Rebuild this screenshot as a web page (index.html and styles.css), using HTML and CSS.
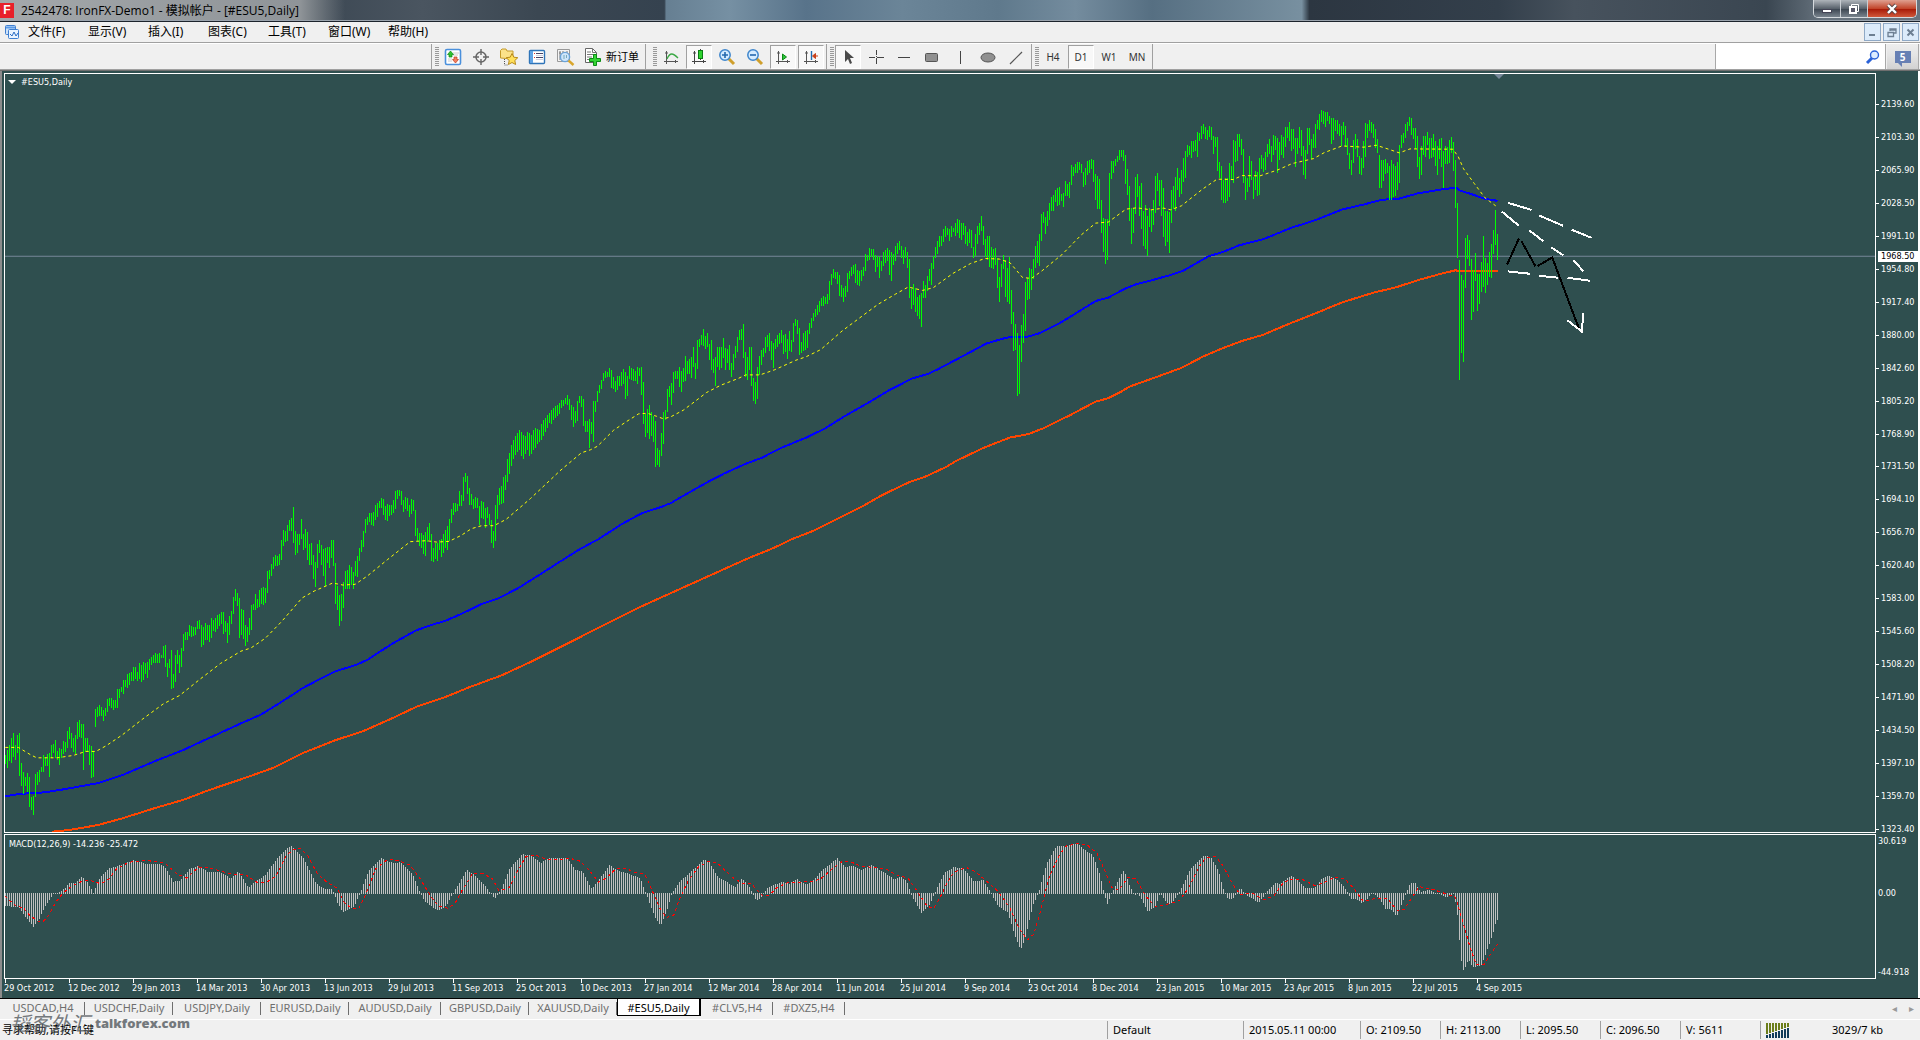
FILE: index.html
```html
<!DOCTYPE html>
<html lang="zh-CN">
<head>
<meta charset="utf-8">
<title>2542478: IronFX-Demo1 - 模拟帐户 - [#ESU5,Daily]</title>
<link rel="stylesheet" href="styles.css">
</head>
<body>
<header class="titlebar">
  <span class="logo">F</span>
  <h1 class="title">2542478: IronFX-Demo1 - 模拟帐户 - [#ESU5,Daily]</h1>
  <div class="winbuttons">
    <button class="win" aria-label="最小化"><svg width="12" height="10"><rect x="1.500" y="5.500" width="9" height="3" fill="#fff" stroke="#445"/></svg></button>
    <button class="win" aria-label="还原"><svg width="12" height="12"><path d="M3.500 1.500h7v7h-7z" fill="none" stroke="#fff" stroke-width="1"/><path d="M2 4h6v6h-6z" fill="#556" stroke="#fff" stroke-width="2"/></svg></button>
    <button class="win close" aria-label="关闭"><svg width="12" height="12"><path d="M2 2l8 8M10 2l-8 8" stroke="#544" stroke-width="4"/><path d="M2 2l8 8M10 2l-8 8" stroke="#fff" stroke-width="2.400"/></svg></button>
  </div>
</header>

<nav class="menubar">
  <svg class="docicon" width="16" height="16"><rect x="1.500" y="1.500" width="10" height="9" rx="1" fill="#cfe3fa" stroke="#3f7fd0"/><path d="M2 3.500h9" stroke="#5b9be8" stroke-width="2"/><rect x="4.500" y="5.500" width="10" height="9" rx="1" fill="#eaf4ff" stroke="#3f7fd0"/><path d="M6 10l2 2 2-4 2 4 2-3" fill="none" stroke="#2a6cc4"/></svg>
  <button>文件(F)</button><button>显示(V)</button><button>插入(I)</button><button>图表(C)</button><button>工具(T)</button><button>窗口(W)</button><button>帮助(H)</button>
  <div class="mdi">
    <button aria-label="最小化子窗口"><svg width="11" height="11"><path d="M2 8h6" stroke="#6d7f92" stroke-width="2"/></svg></button>
    <button aria-label="还原子窗口"><svg width="11" height="11"><path d="M4 4V2h6v4H8M3.500 3h6M2 5.500h5.500v4h-5.500zM2 5.500h5.500" fill="none" stroke="#6d7f92" stroke-width="1.300"/></svg></button>
    <button aria-label="关闭子窗口"><svg width="11" height="11"><path d="M2.500 2.500l6 6M8.500 2.500l-6 6" stroke="#6d7f92" stroke-width="2"/></svg></button>
  </div>
</nav>

<div class="toolbar">
  <div class="group first">
    <button aria-label="市场报价"><svg width="18" height="18"><rect x="1.500" y="1.500" width="15" height="15" rx="1.500" fill="#fff" stroke="#4a90dc" stroke-width="1.600"/><path d="M9 5h6M9 7h5M4 11h4M4 13h4" stroke="#ccc"/><path d="M6.500 3l3 3.500h-1.500v2.500h-3v-2.500h-1.500z" fill="#2fc12f" stroke="#0a8a12" stroke-width=".7"/><path d="M11.500 15l-3-3.500h1.500v-2.500h3v2.500h1.500z" fill="#f08060" stroke="#c03a1c" stroke-width=".7"/></svg></button>
    <button aria-label="数据窗口"><svg width="18" height="18"><circle cx="9" cy="9" r="5" fill="none" stroke="#666" stroke-width="1.500"/><path d="M9 1v6M9 11v6M1 9h6M11 9h6" stroke="#666" stroke-width="1.400"/></svg></button>
    <button aria-label="导航"><svg width="20" height="18"><path d="M1.500 10V2.500l1.500-1.500h4l1 2h6v8z" fill="#fbe28a" stroke="#c49a2a"/><path d="M5.500 11v6h4" fill="none" stroke="#555" stroke-dasharray="1 1"/><path d="M13 5.500l1.800 3.700 4 .5-3 2.800.8 4-3.600-2-3.600 2 .8-4-3-2.800 4-.5z" fill="#ffe05a" stroke="#b88a1a"/></svg></button>
    <button aria-label="终端"><svg width="18" height="16"><rect x="1.500" y="1.500" width="15" height="13" rx="1" fill="#fff" stroke="#2f74b8" stroke-width="1.400"/><path d="M3.500 2v12" stroke="#5ea2e4" stroke-width="3"/><path d="M6 4.500h1M6 8.500h1" stroke="#d33"/><path d="M8 4.500h7M8 8.500h7" stroke="#446"/><path d="M8 6.500h7M8 10.500h7" stroke="#ccd"/></svg></button>
    <button aria-label="策略测试"><svg width="19" height="18"><path d="M1.500 1.500h12v12h-12z" fill="#f4f4f4" stroke="#999"/><path d="M4 3v9M3 5h2M7 3v4M11 3v3" stroke="#777"/><circle cx="9" cy="9" r="4.600" fill="#cfe6fb" stroke="#6aa3d8" stroke-width="1.400"/><path d="M8 7v4M10.500 7v3" stroke="#7ab"/><path d="M12.500 12.500l5 4.500" stroke="#d9a62c" stroke-width="2.400"/></svg></button>
    <button class="order"><svg width="18" height="18"><path d="M1.500 .500h7l4 4v10h-11z" fill="#fff" stroke="#666"/><path d="M8.500 .500v4h4M3 4h4M3 6.500h7M3 9h5M3 11.500h4" fill="none" stroke="#777"/><path d="M9.500 6.500h3v4h4v3h-4v4h-3v-4h-4v-3h4z" fill="#35d435" stroke="#0b8d14"/></svg><span>新订单</span></button>
  </div>
  <div class="group">
    <button aria-label="柱状图"><svg width="16" height="16"><path d="M3.500 2v13M1 12.500h14M2 4h3M12.500 11v3" stroke="#555"/><path d="M4 10c3-7 6-6 11-1" fill="none" stroke="#3aa845" stroke-width="1.300"/></svg></button>
    <button class="on" aria-label="蜡烛图"><svg width="16" height="16"><path d="M3.500 2v13M1 12.500h14M2 4h3M12.500 11v3M9.500 0v11" stroke="#444"/><rect x="7.500" y="1.500" width="4" height="8" fill="#2fd32f" stroke="#0b7d14"/></svg></button>
    <button aria-label="放大"><svg width="18" height="18"><path d="M10 10l6 6" stroke="#cf9f2c" stroke-width="3"/><circle cx="7" cy="7" r="5.200" fill="#d6ecff" stroke="#3f86cc" stroke-width="1.500"/><path d="M4 7h6M7 4v6" stroke="#2468ae" stroke-width="1.600"/></svg></button>
    <button aria-label="缩小"><svg width="18" height="18"><path d="M10 10l6 6" stroke="#cf9f2c" stroke-width="3"/><circle cx="7" cy="7" r="5.200" fill="#d6ecff" stroke="#3f86cc" stroke-width="1.500"/><path d="M4 7h6" stroke="#2468ae" stroke-width="1.600"/></svg></button>
    <button class="on" aria-label="自动滚动"><svg width="16" height="16"><path d="M3.500 2v13M1 12.500h14M2 4h3M12.500 11v3" stroke="#555"/><path d="M7.500 5v6l4-3z" fill="#2fc13f" stroke="#0b8d14"/></svg></button>
    <button class="on" aria-label="图表平移"><svg width="16" height="16"><path d="M3.500 2v13M1 12.500h14M2 4h3M12.500 11v3" stroke="#555"/><path d="M8.500 2v9" stroke="#1f6cb0" stroke-width="1.400"/><path d="M9.500 7l3-2.500v5zM12 7h3" fill="#c8401a" stroke="#c8401a"/></svg></button>
  </div>
  <div class="group">
    <button class="on" aria-label="光标"><svg width="16" height="16"><path d="M5 1v12l3-3 2 5 2-1-2-5h4z" fill="#4a4a4a"/></svg></button>
    <button aria-label="十字光标"><svg width="16" height="16"><path d="M8.500 1v5M8.500 7v1M8.500 9v6M1 8.500h6M9 8.500h7" stroke="#444"/></svg></button>
    <button aria-label="水平线"><svg width="16" height="16"><path d="M2 8.500h12" stroke="#444"/></svg></button>
    <button aria-label="矩形"><svg width="16" height="16"><rect x="1.500" y="4.500" width="12" height="8" rx="1" fill="#909090" stroke="#555"/></svg></button>
    <button aria-label="垂直线"><svg width="16" height="16"><path d="M8.500 2v13" stroke="#444"/></svg></button>
    <button aria-label="椭圆"><svg width="16" height="16"><ellipse cx="8" cy="8.500" rx="7" ry="4.500" fill="#909090" stroke="#555"/></svg></button>
    <button aria-label="趋势线"><svg width="16" height="16"><path d="M2 15L14 3" stroke="#555" stroke-width="1.200"/></svg></button>
  </div>
  <div class="group">
    <button>H4</button><button class="on">D1</button><button>W1</button><button>MN</button>
  </div>
  <div class="search">
    <input type="text" aria-label="搜索">
    <svg width="16" height="16"><path d="M2 14l5-5" stroke="#2a62d8" stroke-width="3"/><circle cx="9.500" cy="6" r="4" fill="#dcecff" stroke="#2a62d8" stroke-width="1.400"/></svg>
  </div>
  <button class="chat" aria-label="消息"><span>5</span></button>
</div>

<main class="chart">
  <section class="plot">
    <svg id="price" viewBox="5 74 1870 759" preserveAspectRatio="none"></svg>
    <h2 class="caption symbol">#ESU5,Daily</h2>
    <i class="shift"></i>
  </section>
  <div class="axis prices">
    <span>2139.60</span><span>2103.30</span><span>2065.90</span><span>2028.50</span><span>1991.10</span><span>1954.80</span><span>1917.40</span><span>1880.00</span><span>1842.60</span><span>1805.20</span><span>1768.90</span><span>1731.50</span><span>1694.10</span><span>1656.70</span><span>1620.40</span><span>1583.00</span><span>1545.60</span><span>1508.20</span><span>1471.90</span><span>1434.50</span><span>1397.10</span><span>1359.70</span><span>1323.40</span>
    <b class="last">1968.50</b>
  </div>
  <section class="plot">
    <svg id="macd" viewBox="5 836 1870 143" preserveAspectRatio="none"></svg>
    <h2 class="caption">MACD(12,26,9) -14.236 -25.472</h2>
  </section>
  <div class="axis levels"><span>30.619</span><i></i><span>0.00</span><i></i><span>-44.918</span></div>
  <div class="dates">
    <span>29 Oct 2012</span><span>12 Dec 2012</span><span>29 Jan 2013</span><span>14 Mar 2013</span><span>30 Apr 2013</span><span>13 Jun 2013</span><span>29 Jul 2013</span><span>11 Sep 2013</span><span>25 Oct 2013</span><span>10 Dec 2013</span><span>27 Jan 2014</span><span>12 Mar 2014</span><span>28 Apr 2014</span><span>11 Jun 2014</span><span>25 Jul 2014</span><span>9 Sep 2014</span><span>23 Oct 2014</span><span>8 Dec 2014</span><span>23 Jan 2015</span><span>10 Mar 2015</span><span>23 Apr 2015</span><span>8 Jun 2015</span><span>22 Jul 2015</span><span>4 Sep 2015</span>
  </div>
</main>

<div class="tabs">
  <button>USDCAD,H4</button><button>USDCHF,Daily</button><button>USDJPY,Daily</button><button>EURUSD,Daily</button><button class="wide">AUDUSD,Daily</button><button>GBPUSD,Daily</button><button>XAUUSD,Daily</button><button class="active">#ESU5,Daily</button><button class="short">#CLV5,H4</button><button class="short">#DXZ5,H4</button>
  <div class="scroll"><button aria-label="向左">◂</button><button aria-label="向右">▸</button></div>
</div>

<footer class="status">
  <span class="help">寻求帮助,请按F1键</span>
  <span class="profile">Default</span>
  <span class="time">2015.05.11 00:00</span>
  <span>O: 2109.50</span>
  <span>H: 2113.00</span>
  <span>L: 2095.50</span>
  <span>C: 2096.50</span>
  <span>V: 5611</span>
  <span class="traffic"><svg width="24" height="15" id="signal"></svg><em>3029/7 kb</em></span>
  <div class="watermark"><i>韬客外汇</i><b>talkforex.com</b></div>
</footer>
<script src="chart.js"></script>
</body>
</html>
```
FILE: styles.css
```css
* { box-sizing: border-box; }
body {
  margin: 0;
  height: 100vh;
  display: flex;
  flex-direction: column;
  overflow: hidden;
  background: #f0f0f0;
  color: #000;
  font: 11px/14px "Noto Sans", "Noto Sans CJK SC", sans-serif;
}
button { font: inherit; color: inherit; border: 0; padding: 0; margin: 0; background: none; }
svg { display: block; }

.titlebar {
  flex: none;
  height: 22px;
  display: flex;
  align-items: flex-start;
  border-bottom: 1px solid #1c232c;
  box-shadow: inset 0 -1px #9aa3ad;
  background:
    linear-gradient(90deg, #a4a8ab 0, #8f9498 300px, transparent 345px),
    linear-gradient(90deg, #39424c 0, #46525c 8%, #36424e 14%, #4a5560 22%, #3b4752 28%, #35424f 34.600%, #667f92 34.700%, #7690a3 38%, #58738a 42%, #6b8598 47%, #5f798c 52%, #748c9e 56%, #566f82 60%, #7890a0 67.800%, #2c3641 68.200%, #333f4b 78%, #47525d 82%, #3a4651 92%, #67737e 95%);
}
.logo { width: 14px; height: 15px; margin: 3px 7px 0 0; background: #e8202a; color: #fff; font: bold 12px/15px "Liberation Sans", sans-serif; text-align: center; }
.title { flex: 1; margin: 1px 0 0; font: 12px/20px "Open Sans", "Noto Sans CJK SC", sans-serif; }
.winbuttons { display: flex; height: 18px; margin-right: 3px; border: 1px solid #d5dade; border-top: 0; border-radius: 0 0 5px 5px; overflow: hidden; }
.win { width: 27px; display: grid; place-items: center; background: linear-gradient(#aeb4ba, #59626c 50%, #3f4954 55%, #78838d); border-right: 1px solid #c9ced3; }
.win.close { width: 48px; border: 0; background: linear-gradient(#dfa090, #c2452b 50%, #a91c08 55%, #d0583a); }

.menubar { flex: none; height: 21px; display: flex; align-items: center; border-bottom: 1px solid #a0a0a0; padding: 0 1px 0 4px; font-size: 12px; }
.menubar > button { width: 60px; text-align: left; }
.docicon { margin-right: 8px; }
.mdi { margin-left: auto; display: flex; gap: 2px; }
.mdi button { width: 17px; height: 18px; display: grid; place-items: center; background: #dcebfa; border: 1px solid #8fa9c6; }

.toolbar { flex: none; height: 28px; display: flex; padding: 1px 0 1px; border-bottom: 1px solid #6f6f6f; box-shadow: inset 0 1px #fff, inset 0 -1px #a0a0a0; }
.group { display: flex; align-items: center; padding: 0 0 0 8px; border-right: 1px solid #a0a0a0; position: relative; }
.group.first { margin-left: 431px; border-left: 1px solid #a0a0a0; margin-right: 4px; }
.group::before { content: ""; width: 4px; height: 20px; margin-left: -5px; margin-right: 1px; background: repeating-linear-gradient(#999 0 1px, transparent 1px 2px); }
.group button { width: 26px; height: 24px; margin-right: 2px; display: grid; place-items: center; color: #333; font-size: 10px; }
.group button.on { background: #f8f8f8; border: 1px solid #a0a0a0; border-right-color: #fff; border-bottom-color: #fff; }
.group button.order { width: 63px; display: flex; align-items: center; gap: 4px; padding-left: 4px; color: #000; font-size: 11px; white-space: nowrap; }
.search { width: 171px; margin-left: auto; display: flex; align-items: center; background: #fff; border: 1px solid #a8a8a8; border-width: 0 1px 0 1px; padding-right: 4px; }
.search input { flex: 1; min-width: 0; border: 0; outline: 0; background: none; }
.chat { width: 32px; margin: 0 1px; display: grid; place-items: center; background: linear-gradient(#eee, #e4e4e4 45%, #d2d2d2); border-right: 1px solid #aaa; }
.chat span { position: relative; width: 16px; height: 12px; background: #6780b4; color: #fff; font: bold 10px/12px "Noto Sans", sans-serif; }
.chat span::after { content: ""; position: absolute; left: 3px; top: 12px; border: 2px solid transparent; border-top-color: #6780b4; border-right-color: #6780b4; }

.chart {
  flex: 1;
  min-height: 0;
  display: grid;
  grid-template: minmax(0, 1fr) 145px 18px / minmax(0, 1fr) 42px;
  row-gap: 1px;
  padding: 2px 0 0 2px;
  border: solid #fff;
  border-width: 0 2px 0 2px;
  border-left-color: #8c8c8c;
  background: #2f4f4f;
  color: #fff;
  font: 9px/12px "DejaVu Sans Condensed", "DejaVu Sans", sans-serif;
}
.plot { position: relative; min-height: 0; border: 1px solid #fff; overflow: hidden; }
.plot svg { width: 100%; height: 100%; }
.caption { position: absolute; left: 4px; top: 3px; margin: 0; font: inherit; }
.caption.symbol { left: 3px; top: 2px; display: flex; align-items: center; gap: 5px; }
.caption.symbol::before { content: ""; border: 4px solid transparent; border-top: 4px solid #fff; border-bottom: 0; }
.shift { position: absolute; left: 79.600%; top: 0; border: 5px solid transparent; border-top-color: #778899; border-bottom: 0; }
.axis { position: relative; padding-left: 1px; }
.axis span { position: relative; padding-left: 4px; }
.prices { display: flex; flex-direction: column; justify-content: space-between; padding-top: 25px; margin-bottom: -2px; }
.prices span::before { content: ""; position: absolute; left: -1px; top: 6px; width: 3px; height: 1px; background: #fff; }
.last { position: absolute; left: 2px; right: 0; top: 23.300%; padding-left: 3px; background: #fff; color: #000; font-weight: normal; line-height: 11px; }
.levels { display: grid; grid-template-rows: 12px 40fr 12px 66fr 12px; padding: 1px 0 1px 0; }
.levels span { padding-left: 2px; }
.dates { display: flex; white-space: nowrap; margin-top: -1px; }
.dates span { flex: none; width: calc(100% * 64 / 1872); padding-top: 3px; background: linear-gradient(#fff, #fff) 1px 0 / 1px 4px no-repeat; }

.tabs { flex: none; height: 22px; display: flex; align-items: stretch; border-top: 1px solid #000; box-shadow: inset 0 -1px #fff; padding: 0 0 4px 1px; color: #6e6e6e; }
.tabs > button { width: 88px; line-height: 15px; background: linear-gradient(#6e6e6e, #6e6e6e) right 3px / 1px 13px no-repeat; }
.tabs > button:first-child { width: 84px; }
.tabs > button.wide { width: 92px; }
.tabs > button.short { width: 72px; }
.tabs > button.active { width: 84px; background: #fff; color: #000; border: solid #000; border-width: 0 2px 1px 1px; }
.scroll { margin-left: auto; display: flex; gap: 12px; padding-right: 6px; font-size: 10px; color: #999; }

.status { flex: none; height: 20px; display: flex; position: relative; line-height: 18px; padding-top: 1px; }
.status > span { width: 80px; padding-left: 5px; border-left: 1px solid #a0a0a0; white-space: nowrap; height: 18px; }
.status > .help { flex: 1; border: 0; padding-left: 2px; }
.status > .profile { width: 136px; }
.status > .time { width: 117px; }
.status > .traffic { width: 160px; display: flex; align-items: center; gap: 42px; }
.traffic em { font-style: normal; }
.watermark { position: absolute; left: 10px; top: -7px; display: flex; align-items: center; gap: 5px; color: #555b60; opacity: .8; font: bold 13px/20px "Open Sans", sans-serif; }
.watermark i { font: italic 20px/20px "Noto Sans CJK SC", sans-serif; }
```
FILE: chart.js
```js
// Each block: origin x, origin y, units per pixel across; three units per pixel down.
// Bars are triples: x, high, low.
const BARS = [
[0,480,2.45,`13 828 855 18 812 866 23 798 845 28 777 851 33 762 833 38 798 842 42 768 822 47 762 890 52 852 920 57 879 945 62 893 920 67 881 938 72 893 983 77 953 993 82 950 1007 87 885 953 92 879 917 97 873 908 101 864 880 106 828 880 111 834 860 116 825 860 121 822 893 126 798 836 131 795 822 136 783 836 141 816 842 146 807 857 151 810 836 155 786 824 160 789 818 165 757 807 170 744 780 175 762 807 180 777 818 185 768 824 190 729 780 195 723 774 199 735 776 204 735 872 209 777 818 214 777 818 219 798 857 224 801 896 229 816 893 234 690 743 239 684 714 244 678 710 249 684 712 253 693 725 258 687 710 263 660 700 268 657 682 273 657 686 278 663 694 283 663 686 288 630 686 292 630 656 297 625 640 302 603 646 307 603 625 312 585 627 317 582 617 322 579 605 327 564 605 332 564 600 337 579 605 342 552 600 347 558 608 351 549 602 356 552 585 361 549 597 366 540 573 371 534 557 376 528 553 381 522 553 386 525 553 391 522 552 396 528 537 401 501 537 405 498 563 410 552 593 415 540 567 420 513 629 425 585 626 430 528 608 435 513 556 440 528 581 445 507 563 449 465 515 454 459 482 459 459 482 464 438 472 469 441 473 474 444 470 479 444 468 484 426 450 489 423 450 493 438 503 498 444 497 503 432 482 508 438 482 513 438 488 518 417 476 523 423 456 528 417 458 533 408 450 538 405 440 543 399 435 547 399 464 552 426 458 557 432 491 562 411 467 567 396 434 572 354 405 577 330 365 582 342 380 587 357 476 592 390 467 596 393 479 601 438 500 606 444 488 611 417 467 616 378 452 621 375 393 626 345 392 631 360 386 636 333 384 641 327 376 645 324 378 650 327 372 655 276 341 660 273 300 665 255 290 670 234 270 675 228 262 680 231 261 685 225 257 689 183 243 694 153 201 699 156 190 704 138 186 709 123 156 714 117 156 719 84 192 724 156 228 729 165 221 734 165 197 738 120 180 743 165 212 748 150 206 753 159 243 758 195 257 763 192 257 768 228 299 773 249 323 778 195 267 783 183 221 787 198 257 792 210 290 797 207 320 802 204 251 807 204 266 812 183 237 817 183 260 822 252 374 827 321 392 832 348 440 837 345 425 841 309 386 846 276 329 851 273 329 856 258 330 861 264 317 866 279 329 871 246 290 876 231 293 881 207 245 885 183 219 890 156 204 895 120 161 900 114 138 905 102 130 910 102 137 915 99 140 920 78 122 925 72 113 929 66 86 934 57 86 939 60 107 944 81 122 949 75 125 954 78 110 959 78 107 964 63 101 969 36 89 974 33 59 979 33 50 984 36 77 988 63 98 993 54 89 998 57 95 1003 78 113 1008 60 105 1013 63 97 1018 93 171 1023 147 186 1028 162 200 1032 162 206 1037 168 225 1042 159 230 1047 144 189 1052 132 182 1057 165 245 1062 207 248 1067 192 240 1072 192 245 1077 183 212 1082 180 234 1087 165 221 1091 153 206 1096 141 212 1101 120 186 1106 90 131 1111 72 107 1116 72 98 1121 75 97 1126 36 80 1131 48 80 1136 -5 65 1141 -18 10 1146 -10 45 1150 27 77 1155 45 77 1160 60 90 1165 54 86 1170 57 86 1175 80 137 1180 66 117 1185 69 120 1190 87 147 1194 84 117 1199 105 137 1204 123 192 1209 156 207 1214 78 186 1219 48 120 1224 27 77 1229 21 74 1234 -5 71 1239 -12 32`],
[506,420,1,`1 40 63 3 33 55 5 25 47 7 20 40 9 16 36 11 13 32 13 10 30 15 12 37 17 15 40 19 16 35 21 12 30 23 13 37 25 15 35 27 10 30 29 8 28 31 9 24 33 10 22 35 4 20 37 0 16 39 -2 12 41 -5 8 43 -7 3 45 -10 4 47 -12 0 49 -14 -2 51 -15 -4 53 -17 -6`],
[560,200,2.8,`5 600 624 10 600 617 15 594 611 21 585 614 26 597 630 32 615 660 38 621 681 43 633 669 49 603 663 54 588 609 60 588 620 65 597 678 71 663 695 77 663 695 82 657 744 88 666 702 93 603 725 99 603 635 105 573 606 110 555 580 116 540 566 121 519 543 127 513 533 133 516 531 138 504 532 144 510 564 149 531 567 155 543 575 161 528 570 166 528 557 172 516 557 178 507 551 183 516 597 189 528 588 194 498 537 200 504 541 205 507 543 211 513 543 217 501 551 222 504 528 228 501 585 234 546 672 239 642 710 245 627 699 250 615 717 256 636 708 262 648 725 267 663 803 273 744 798 278 750 803 284 699 771 290 636 732 295 630 660 301 567 635 306 558 590 312 549 614 317 516 580 323 513 538 329 513 537 334 501 561 340 513 576 345 504 545 351 468 543 357 483 521 362 477 521 368 471 534 373 441 500 379 489 537 385 420 507 390 417 441 396 405 435 401 387 438 407 408 447 413 399 441 418 432 480 424 420 510 429 477 519 435 471 557 441 441 500 446 441 510 452 441 504 457 414 475 463 444 510 469 447 489 474 435 510 480 489 531 485 462 510 491 438 473 496 411 456 502 390 420 508 387 420 513 372 474 519 456 531 525 471 540 530 441 510 536 441 557 541 534 603 547 546 612 552 501 598 558 468 526 564 450 495 569 444 470 575 411 458 580 405 441 586 399 453 592 423 480 597 429 504 603 417 447 608 405 441 614 399 432 620 390 429 625 405 462 631 402 456 637 417 477 642 393 453 648 420 456 653 369 426 659 357 378 664 360 402 670 384 465 676 426 459 681 399 453 687 393 450 692 390 444 698 369 402 704 354 384 709 339 363 715 327 351 720 315 345 726 303 336 732 294 318 737 288 318 743 291 312 748 282 312 754 243 300 760 222 255 765 207 234 771 216 237 776 216 252 782 225 288 788 255 291 793 264 306 799 258 291 804 219 276 810 213 237 816 201 229 821 195 222 827 192 250 832 210 255 838 213 258 844 210 243 849 201 228 855 162 213 861 165 183 866 144 180 872 147 170 877 147 180 883 165 215 889 168 201 894 171 234 900 183 213 905 156 198 911 150 190 917 144 183 922 150 225 928 156 243 934 162 195 939 138 183 945 129 162 950 123 150 956 138 175 961 150 192 967 141 175 972 156 204 978 177 294 984 267 327 989 252 315 995 264 336 1001 291 348 1006 285 357 1012 279 381 1017 243 294 1023 255 294 1028 228 273 1034 207 243 1040 189 255 1045 168 207 1051 141 174 1056 123 162 1062 108 140 1068 108 138 1073 87 126 1079 78 111 1085 84 105 1090 87 123 1096 78 111 1101 84 96 1107 69 108 1113 57 98 1118 60 114 1124 69 120 1129 69 105 1135 78 132 1141 96 138 1146 87 129 1152 90 144 1157 141 174 1163 102 168 1169 78 132 1174 69 105 1180 48 93 1185 78 135 1191 117 171 1197 108 180 1202 108 201 1208 141 204 1213 147 207 1219 144 195 1225 174 264 1230 231 306 1236 192 261 1241 165 207 1247 180 291 1253 204 306 1258 171 312 1264 270 372 1269 336 453 1275 372 450 1281 399 588 1286 435 582 1292 375 486 1297 342 429 1303 246 393 1308 234 300 1314 204 297 1320 207 270 1325 177 237 1331 138 204 1337 123 189 1342 102 198 1348 42 123 1353 36 69 1359 51 102 1365 33 78 1370 9 60 1376 -9 33 1381 -15 33 1387 -30 5 1393 -35 18 1398 -40 15`],
[1060,90,2.8,`4 312 333 10 309 350 15 273 318 21 282 318 26 276 324 32 225 285 38 231 258 43 222 249 49 216 249 54 216 240 60 222 249 65 246 291 71 234 285 77 213 255 82 210 249 88 207 237 93 210 276 99 252 330 105 258 357 110 267 357 116 330 430 121 384 486 127 387 522 133 387 510 138 249 408 144 213 267 149 213 249 155 207 228 161 198 216 166 180 210 172 180 201 178 180 213 183 195 282 189 237 315 194 288 393 200 354 462 205 354 429 211 261 372 217 252 321 222 288 378 228 279 417 233 363 468 239 345 477 245 378 498 250 354 411 256 360 426 261 330 405 267 258 369 273 249 303 278 270 348 284 270 378 289 294 441 295 363 468 301 363 456 306 366 489 312 300 399 317 288 357 323 261 363 329 234 300 334 264 321 340 240 312 345 204 276 351 183 264 357 165 201 362 168 195 368 153 204 373 153 186 379 150 183 385 126 201 390 129 153 396 108 147 401 102 132 407 111 147 413 120 150 418 108 141 424 111 150 429 138 192 435 141 171 441 141 243 446 216 264 452 228 330 457 270 339 463 264 339 469 264 333 474 219 321 480 228 270 485 150 279 491 153 216 497 132 213 502 132 171 508 147 195 513 177 279 519 258 330 525 264 306 530 198 291 536 213 270 541 261 327 547 243 300 553 246 318 558 204 315 564 195 237 569 204 246 575 186 240 581 162 201 586 147 192 592 168 216 597 135 195 603 138 180 609 144 249 614 156 210 620 135 195 625 141 204 631 111 171 637 111 144 642 96 153 648 117 183 653 117 177 659 144 231 664 144 192 670 111 174 676 120 198 681 168 255 687 180 267 693 114 192 698 114 165 704 147 207 709 132 174 715 102 174 721 90 117 726 72 120 732 60 96 737 63 102 743 66 111 749 66 93 754 78 102 760 84 162 765 84 150 771 90 123 776 90 132 782 102 138 788 108 168 793 96 135 799 108 171 805 144 195 810 189 237 816 210 255 821 150 219 827 132 176 832 147 201 838 198 252 844 204 255 849 153 234 855 99 201 861 102 144 866 90 123 872 96 129 877 102 144 883 117 174 889 147 189 894 195 294 900 210 294 905 210 273 911 207 252 917 219 249 922 228 330 928 210 330 933 222 321 939 228 318 945 216 300 950 165 279 956 135 174 961 129 159 967 102 144 973 96 123 978 81 108 984 84 135 989 114 147 995 114 177 1001 138 231 1006 201 267 1012 168 255 1017 138 195 1023 138 201 1029 126 165 1034 144 207 1040 144 204 1045 132 201 1051 153 228 1057 168 255 1062 147 207 1068 144 231 1073 183 294 1079 168 222 1085 171 222 1090 150 219 1096 141 189 1101 156 243 1107 210 354 1113 339 504 1118 510 870 1124 555 789 1129 570 816 1135 444 594 1141 435 507 1146 450 528 1152 507 690 1157 540 666 1163 489 573 1169 552 663 1174 552 642 1180 516 606 1185 438 591 1191 504 609 1197 519 585 1202 486 561 1208 462 564 1213 420 492 1219 360 465 1225 432 510`]
];
// The second block is written in whole pixels
BARS[1][3] = BARS[1][3].split(" ").map((v, i) => i % 3 ? v * 3 : v).join(" ");

const SLOW = [
[0,480,2.45,`128 1058 170 1053 240 1038 300 1018 380 987 450 962 510 934 590 901 670 866 740 823 820 784 890 756 960 718 1020 683 1090 654 1150 624 1230 588 1300 548 1380 499 1568 383`],
[560,200,2.8,`520 1080 600 1045 650 1019 710 994 780 956 850 919 900 888 980 847 1020 833 1080 803 1110 784 1190 743 1260 714 1310 704 1350 688 1430 646 1500 606 1535 596 1568 578`],
[1060,90,2.8,`195 891 260 866 340 835 400 801 450 778 510 754 570 735 640 703 720 669 790 638 880 608 940 593 1000 572 1060 554 1110 541 1112 543 1225 543`]
];
const MEDIUM = [
[0,480,2.45,`13 952 45 945 80 942 110 940 160 930 240 912 300 888 380 846 450 812 510 778 590 733 640 706 690 668 740 628 775 605 820 577 870 558 900 542 960 494 1020 453 1060 436 1090 425 1130 404 1180 374 1220 358 1270 326 1330 280 1368 250`],
[560,200,2.8,`10 1080 55 1050 110 1018 170 976 228 942 285 922 310 911 360 880 420 844 460 822 520 793 565 775 620 745 690 714 740 688 800 648 870 605 920 573 985 537 1030 523 1060 508 1120 474 1195 431 1250 414 1280 411 1310 411 1345 400 1390 375`],
[1060,90,2.8,`0 700 35 677 100 634 135 624 180 598 215 583 250 574 305 557 345 543 415 500 460 485 500 467 570 448 650 413 710 393 790 359 850 344 900 330 950 326 1000 311 1060 300 1110 293 1120 302 1150 312 1190 327 1225 333`]
];
const FAST = [
[0,480,2.45,`13 805 45 805 75 827 90 836 140 836 180 829 210 817 235 817 260 800 300 767 350 719 400 674 440 649 490 600 540 553 590 516 615 506 650 477 690 427 740 356 770 335 815 311 840 317 870 315 900 290 950 240 1005 187 1045 184 1070 188 1100 186 1130 168 1155 148 1180 139 1210 139 1240 120 1300 57 1345 5`],
[560,200,2.8,`0 814 60 760 85 751 105 740 150 692 185 667 220 643 245 641 270 650 290 658 310 652 345 632 380 604 410 579 450 557 500 536 520 526 560 526 600 511 660 482 690 471 730 450 790 394 860 338 890 314 940 283 975 262 1015 272 1045 264 1100 221 1150 191 1190 176 1230 178 1260 189 1295 233 1320 236 1350 213 1390 178`],
[1060,90,2.8,`5 495 60 435 100 400 135 397 185 358 215 354 255 360 290 355 310 360 340 348 400 297 440 268 485 269 510 257 560 258 610 240 650 221 710 206 740 188 790 168 850 172 885 166 920 178 950 189 980 177 1100 178 1115 200 1130 237 1160 281 1190 324 1220 348`]
];
const HIST = [
[0,820,2.063,`10 262 30 263 38 265 50 290 68 324 80 300 95 255 110 225 120 222 135 205 142 192 155 192 168 174 180 190 192 222 205 176 225 148 250 137 275 123 300 134 325 134 340 145 357 188 370 186 390 150 407 141 430 160 455 160 475 178 490 156 500 178 512 207 525 188 545 170 570 120 590 90 601 81 625 118 650 190 665 208 685 210 695 250 706 281 730 262 742 222 760 155 787 117 812 134 825 129 850 165 862 208 875 246 890 262 903 276 920 260 935 220 950 184 962 152 980 170 1000 200 1020 240 1032 215 1050 150 1077 105 1095 110 1115 132 1130 118 1170 118 1185 152 1200 156 1220 210 1237 178 1257 138 1275 156 1300 166 1320 178 1333 228 1350 294 1362 321 1375 275 1385 225 1400 190 1425 158 1450 123 1462 127 1480 174 1500 190 1515 205 1530 178 1545 205 1560 245 1566 240`],
[760,820,2.063,`3 232 15 205 45 188 60 194 75 180 95 198 110 182 130 150 145 135 158 117 175 144 190 140 210 153 230 138 260 165 275 180 290 174 302 186 312 230 332 281 350 255 362 215 380 160 400 144 420 150 440 186 460 184 475 220 490 262 510 280 525 350 537 394 548 348 562 260 575 215 590 135 610 82 635 80 655 72 665 90 685 106 700 165 708 215 715 258 725 222 740 178 750 153 762 200 772 230 780 225 800 279 815 262 825 222 832 240 845 258 858 235 870 204 885 155 915 108 930 116 945 155 955 210 965 242 975 238 990 206 1000 225 1028 252 1045 218 1063 190 1072 195 1095 170 1110 185 1125 208 1145 205 1158 178 1172 168 1190 184 1205 204 1220 242 1230 240 1240 252 1252 240 1262 222 1275 235 1290 270 1303 272 1312 294 1325 250 1340 195 1350 190 1362 220 1377 212 1400 225 1415 234 1430 225 1437 270 1445 420 1451 456 1458 430 1462 425 1470 445 1487 440 1500 390 1510 350 1518 305 1524 303`]
];
const SIGNAL = [
[0,820,2.063,`10 230 20 245 35 262 48 266 62 290 78 306 90 306 100 290 115 250 130 222 150 200 175 183 190 186 208 194 225 180 240 150 265 130 300 124 340 132 365 165 385 177 410 144 430 146 455 156 480 166 505 166 530 190 550 190 570 170 590 110 605 92 620 88 635 110 655 165 675 190 695 208 710 250 725 268 740 268 755 225 775 150 800 121 825 126 845 138 865 175 890 235 905 262 925 268 940 250 955 210 975 164 995 163 1015 178 1030 216 1050 206 1070 150 1085 112 1105 108 1125 120 1150 122 1175 118 1195 125 1215 152 1235 190 1250 178 1270 150 1290 148 1310 160 1330 165 1350 230 1362 270 1375 296 1390 288 1402 240 1420 185 1440 145 1460 128 1480 132 1510 174 1530 192 1550 194 1566 220`],
[760,820,2.063,`5 230 20 228 35 205 60 190 110 188 130 175 150 148 170 127 185 127 205 140 230 145 260 150 285 170 305 176 325 218 345 262 358 268 370 240 385 195 400 160 425 145 445 158 465 184 490 215 515 265 535 330 552 362 565 345 580 270 595 180 615 115 630 82 655 73 675 78 695 102 710 150 725 205 740 214 760 174 775 180 795 230 815 262 835 258 865 245 885 205 905 145 920 115 940 113 955 140 975 195 990 226 1015 222 1040 242 1060 230 1080 190 1100 180 1120 182 1145 200 1165 190 1185 175 1205 178 1225 208 1245 248 1270 238 1295 240 1315 275 1330 270 1345 235 1360 203 1385 210 1410 222 1435 235 1450 310 1465 385 1478 438 1495 435 1510 400 1522 375`]
];

function rows(blocks, size) {
  return blocks.flatMap(([ox, oy, unit, text]) => {
    const n = text.split(" ").map(Number), out = [];
    for (let i = 0; i < n.length; i += size) {
      out.push([ox + n[i] / unit, ...n.slice(i + 1, i + size).map(v => oy + v / 3)]);
    }
    return out;
  });
}
function path(d, attrs) {
  return `<path d="${d}" shape-rendering="crispEdges" fill="none" ${attrs}/>`;
}
function line(blocks, attrs) {
  return path("M" + rows(blocks, 2).map(p => p.map(v => v.toFixed(1)).join(" ")).join("L"), attrs);
}
function rect(x, top, bottom) {
  return `M${x} ${top}h1V${bottom}h-1z`;
}

let bars = "";
for (const [x, high, low] of rows(BARS, 3)) {
  bars += rect(2 * Math.round((x - 5.6) / 2) + 5, Math.round(high), Math.round(low));
}

// Trend drawings to the right of the last bar
const own = [1060, 90, 2.8];
const seg = list => list.map(t => "M" + rows([[...own, t]], 2).map(p => p.join(" ")).join("L")).join("");
const white = seg(["1254 339 1320 360", "1342 377 1409 408", "1433 420 1488 444", "1237 365 1285 408", "1314 422 1353 454", "1376 473 1409 497", "1438 512 1465 544", "1254 545 1315 552", "1342 558 1394 564", "1421 564 1483 573"]);
const black = seg(["1252 524 1285 446", "1292 454 1331 529", "1337 529 1377 504", "1377 500 1455 722"]);
const head = seg(["1421 692 1459 724", "1465 670 1461 731"]);

document.getElementById("price").innerHTML =
  path("M5 256.5H1875", 'stroke="#778899"') +
  line(SLOW, 'stroke="#ff4500" stroke-width="2"') +
  line(MEDIUM, 'stroke="#0000ff" stroke-width="2"') +
  path(bars, 'style="fill:#00ff00"') +
  line(FAST, 'stroke="#ffff00" stroke-dasharray="3 3"') +
  path(white, 'stroke="#fff" stroke-width="2"') +
  path(black, 'stroke="#000" stroke-width="2"') +
  path(head, 'stroke="#fff" stroke-width="2"');

// MACD histogram: a column every second pixel, read off the sampled outline
const outline = rows(HIST, 2);
let hist = "", k = 0;
for (let x = 5; x <= 1498; x += 2) {
  while (k < outline.length - 2 && outline[k + 1][0] < x) k++;
  const [x0, y0] = outline[k], [x1, y1] = outline[k + 1];
  const t = Math.max(0, Math.min(1, (x - x0) / (x1 - x0)));
  const y = Math.round(y0 + (y1 - y0) * t);
  hist += rect(x, Math.min(y, 894), Math.max(y, 895));
}
document.getElementById("macd").innerHTML =
  path(hist, 'style="fill:#c0c0c0"') +
  line(SIGNAL, 'stroke="#ff0000" stroke-dasharray="3 3"');

let meter = "";
for (let i = 0; i < 8; i++) {
  const cut = 11 - i;
  meter += `<rect x="${i * 3}" y="0" width="2" height="${cut}" fill="#6b7d1a"/><rect x="${i * 3}" y="${cut + 1}" width="2" height="${14 - cut}" fill="#123c5a"/>`;
}
document.getElementById("signal").innerHTML = meter;
```
